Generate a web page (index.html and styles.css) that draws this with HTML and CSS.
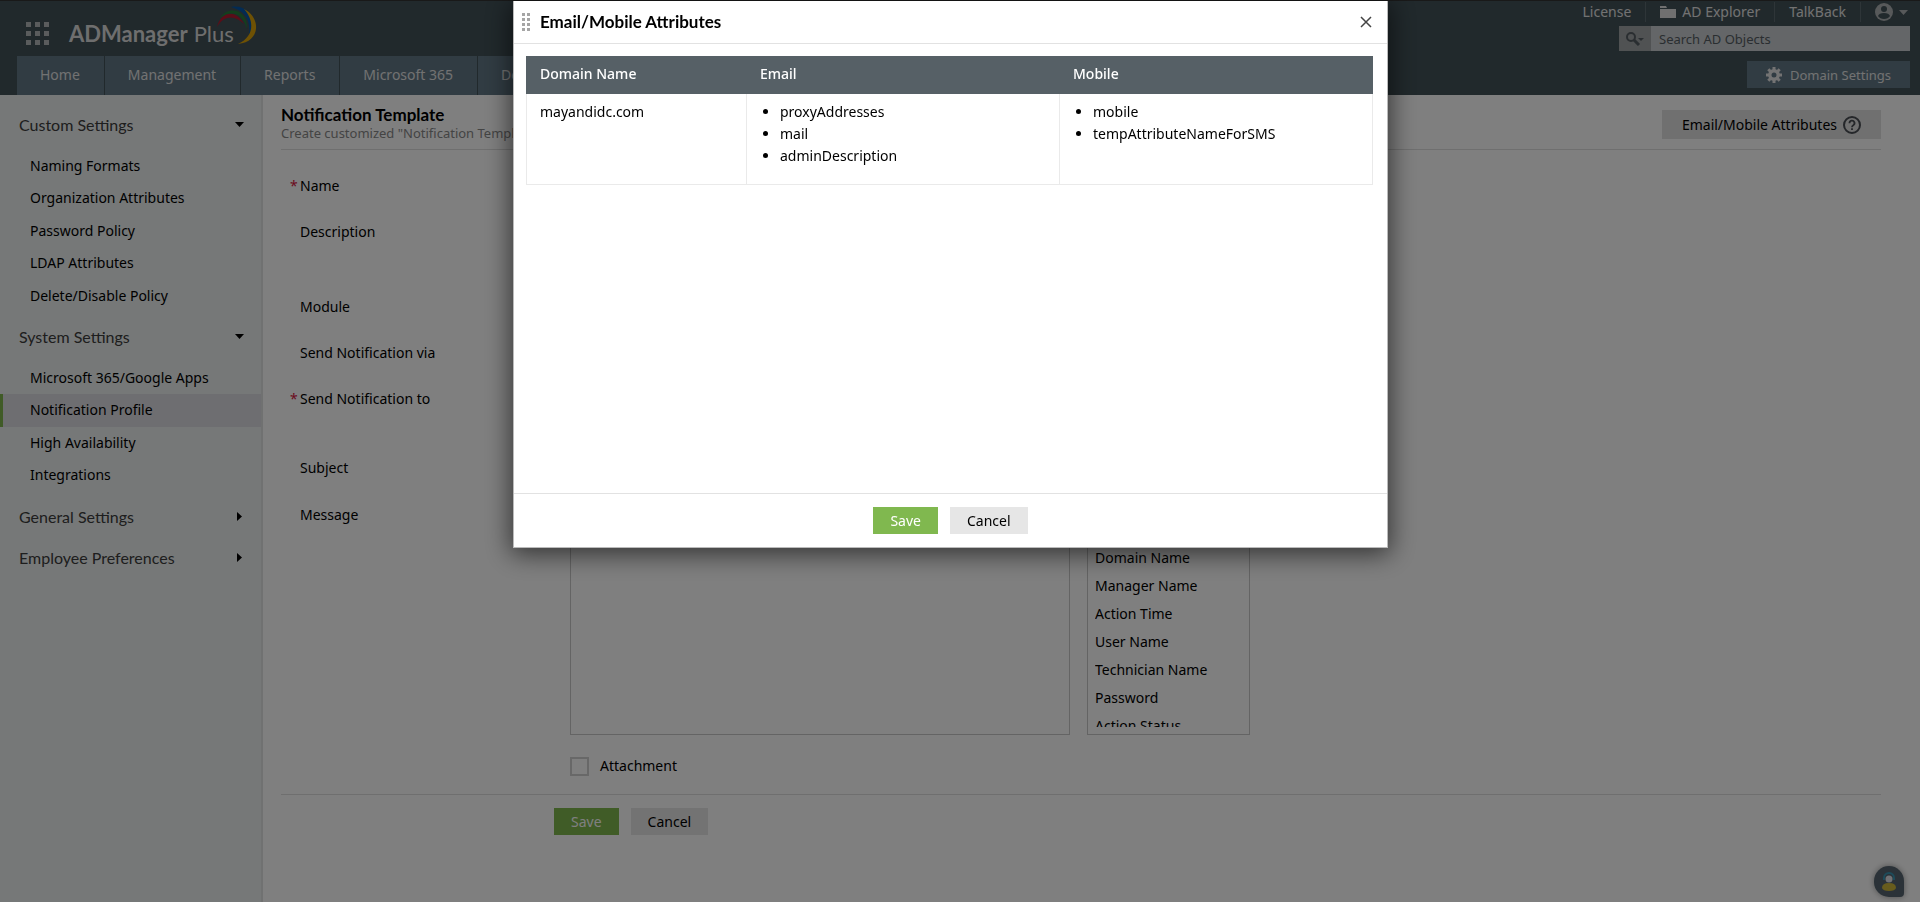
FILE: index.html
```html
<!DOCTYPE html>
<html lang="en">
<head>
<meta charset="utf-8">
<title>ADManager Plus</title>
<link rel="stylesheet" href="styles.css">
</head>
<body>
<header class="header">
  <div class="header-left">
    <div class="brand">
      <button class="icon-button" aria-label="Applications">
        <svg width="24" height="24" viewBox="0 0 24 24" fill="#b5b8ba"><path d="M0 0h5v5H0zM9 0h5v5H9zM18 0h5v5h-5zM0 9h5v5H0zM9 9h5v5H9zM18 9h5v5h-5zM0 18h5v5H0zM9 18h5v5H9zM18 18h5v5h-5z"/></svg>
      </button>
      <a class="logo" href="#"><b>ADManager</b> Plus
        <svg class="logo-arcs" width="42" height="40" viewBox="0 0 42 40">
          <path d="M1 21C5 5 20 3 28 18C19 9 8 9 1 21Z" fill="#b51a30"/>
          <path d="M4 12C12 -1 32 3 31 23C27 8 16 3 4 12Z" fill="#267f3b"/>
          <path d="M15 1C31 -2 41 12 33 29C35 14 29 5 15 1Z" fill="#0557a8"/>
          <path d="M28 3C45 11 45 36 22 38C38 31 39 15 28 3Z" fill="#dca309"/>
        </svg>
      </a>
    </div>
    <nav class="tabs">
      <a href="#">Home</a><a href="#">Management</a><a href="#">Reports</a><a href="#">Microsoft 365</a><a href="#">Delegation</a>
    </nav>
  </div>
  <div class="header-right">
    <div class="quick-links">
      <a href="#">License</a>
      <a href="#"><svg width="16" height="12" viewBox="0 0 16 12" fill="#e0e0e0"><path d="M0 0h6l1 2H0zM0 3h16v9H0z"/></svg>AD Explorer</a>
      <a href="#">TalkBack</a>
      <a href="#" class="account" aria-label="Account">
        <svg width="18" height="18" viewBox="0 0 18 18"><circle cx="9" cy="9" r="9" fill="#aeb2b4"/><circle cx="9" cy="6" r="3" fill="#425258"/><path d="M3 13q1-3 6-3t6 3q-2 3-6 3t-6-3z" fill="#425258"/></svg>
        <svg width="9" height="5" viewBox="0 0 9 5" fill="#aeb2b4"><path d="M0 0h9L4.500 5z"/></svg>
      </a>
    </div>
    <div class="search">
      <button class="search-type" aria-label="Search type">
        <svg width="18" height="14" viewBox="0 0 18 14"><circle cx="5" cy="5" r="4" fill="none" stroke="#555d62" stroke-width="2"/><path d="M8 8l5 5" stroke="#555d62" stroke-width="3"/><path d="M12 6h6l-3 3z" fill="#555d62"/></svg>
      </button>
      <input type="text" placeholder="Search AD Objects" aria-label="Search AD Objects">
    </div>
    <button class="domain-settings">
      <svg width="16" height="16" viewBox="0 0 16 16"><circle cx="8" cy="8" r="4.200" fill="none" stroke="#e6e6e6" stroke-width="3.400"/><path d="M8 0v3M8 13v3M0 8h3M13 8h3M2.300 2.300l2.200 2.200M11.500 11.500l2.200 2.200M2.300 13.700l2.200-2.200M11.500 4.500l2.200-2.200" stroke="#e6e6e6" stroke-width="3"/></svg>
      Domain Settings
    </button>
  </div>
</header>

<div class="layout">
  <aside class="sidebar">
    <button class="group">Custom Settings<svg width="9" height="5" viewBox="0 0 9 5"><path d="M0 0h9L4.500 5z"/></svg></button>
    <ul>
      <li><a href="#">Naming Formats</a></li>
      <li><a href="#">Organization Attributes</a></li>
      <li><a href="#">Password Policy</a></li>
      <li><a href="#">LDAP Attributes</a></li>
      <li><a href="#">Delete/Disable Policy</a></li>
    </ul>
    <button class="group">System Settings<svg width="9" height="5" viewBox="0 0 9 5"><path d="M0 0h9L4.500 5z"/></svg></button>
    <ul>
      <li><a href="#">Microsoft 365/Google Apps</a></li>
      <li><a href="#" class="active">Notification Profile</a></li>
      <li><a href="#">High Availability</a></li>
      <li><a href="#">Integrations</a></li>
    </ul>
    <button class="group">General Settings<svg width="9" height="9" viewBox="0 0 9 9"><path d="M2 0v9l5-4.500z"/></svg></button>
    <button class="group">Employee Preferences<svg width="9" height="9" viewBox="0 0 9 9"><path d="M2 0v9l5-4.500z"/></svg></button>
  </aside>

  <main class="content">
    <div class="page-head">
      <div>
        <h1>Notification Template</h1>
        <p>Create customized "Notification Templates"</p>
      </div>
      <button class="attributes">Email/Mobile Attributes
        <svg width="18" height="18" viewBox="0 0 18 18" fill="none" stroke="#4a4e54" stroke-width="2"><circle cx="9" cy="9" r="8"/><path d="M6.500 7.200a2.500 2.500 0 1 1 3.800 2q-1.300.8-1.300 2M9 12.200v1.800" stroke-width="1.800"/></svg>
      </button>
    </div>
    <form class="form">
      <div class="row"><label for="name" class="required">Name</label><input id="name" type="text"></div>
      <div class="row tall"><label for="description">Description</label><textarea id="description"></textarea></div>
      <div class="row"><label for="module">Module</label><select id="module"></select></div>
      <div class="row"><label for="via">Send Notification via</label><select id="via"></select></div>
      <div class="row mid"><label for="to" class="required">Send Notification to</label><input id="to" type="text"></div>
      <div class="row"><label for="subject">Subject</label><input id="subject" type="text"></div>
      <div class="row message">
        <label for="message">Message</label>
        <textarea id="message"></textarea>
        <div class="macros">
          <ul>
            <li>Full Name</li><li>Domain Name</li><li>Manager Name</li><li>Action Time</li><li>User Name</li><li>Technician Name</li><li>Password</li><li>Action Status</li>
          </ul>
        </div>
      </div>
      <div class="attachment"><input type="checkbox" id="attachment"><label for="attachment">Attachment</label></div>
      <div class="form-actions"><button type="button" class="btn save">Save</button><button type="button" class="btn">Cancel</button></div>
    </form>
  </main>
</div>

<button class="chat" aria-label="Support chat">
  <svg width="14" height="19" viewBox="0 0 14 19"><path d="M2 8V6a5 5 0 0 1 10 0v2" fill="none" stroke="#3a97b5" stroke-width="2"/><circle cx="7" cy="7" r="3.500" fill="#e2e2e8"/><path d="M0 16q0-5 7-5t7 5q-1 3-7 3t-7-3z" fill="#d0b83a"/></svg>
</button>

<div class="overlay">
  <section class="modal" role="dialog" aria-labelledby="modal-title">
    <div class="modal-head">
      <svg width="9" height="19" viewBox="0 0 9 19" fill="#a5a5a5"><path d="M0 0h3v3H0zM5 0h3v3H5zM0 5h3v3H0zM5 5h3v3H5zM0 10h3v3H0zM5 10h3v3H5zM0 15h3v3H0zM5 15h3v3H5z"/></svg>
      <h2 id="modal-title">Email/Mobile Attributes</h2>
      <button class="icon-button" aria-label="Close"><svg width="12" height="12" viewBox="0 0 12 12"><path d="M1 1l10 10M11 1L1 11" stroke="#444" stroke-width="1.500"/></svg></button>
    </div>
    <div class="modal-body">
      <table>
        <thead><tr><th class="col-domain">Domain Name</th><th>Email</th><th>Mobile</th></tr></thead>
        <tbody><tr>
          <td>mayandidc.com</td>
          <td><ul><li>proxyAddresses</li><li>mail</li><li>adminDescription</li></ul></td>
          <td><ul><li>mobile</li><li>tempAttributeNameForSMS</li></ul></td>
        </tr></tbody>
      </table>
    </div>
    <div class="modal-foot"><button class="btn save">Save</button><button class="btn">Cancel</button></div>
  </section>
</div>
</body>
</html>
```
FILE: styles.css
```css
* { box-sizing: border-box; }
body {
  margin: 0;
  min-height: 100vh;
  display: flex;
  flex-direction: column;
  font: 14px/22px "Noto Sans", "DejaVu Sans", sans-serif;
  color: #000;
  background: #fff;
}
button, input, select, textarea { font: inherit; color: inherit; }
button { border: 0; padding: 0; background: none; cursor: pointer; }
a { color: inherit; text-decoration: none; }
ul { margin: 0; padding: 0; list-style: none; }
h1, h2, p { margin: 0; }
svg { display: block; flex: none; }

.header {
  display: flex;
  justify-content: space-between;
  height: 95px;
  background: #425258;
  border-top: 1px solid #333;
  color: #e4e4e4;
}
.header-left { display: flex; flex-direction: column; }
.brand { display: flex; align-items: center; gap: 19px; height: 56px; padding: 10px 0 0 26px; }
.logo { display: flex; position: relative; font: 400 22px/28px Lato, sans-serif; gap: 6px; color: #ddd; }
.logo b { font-weight: 700; }
.logo-arcs { position: absolute; right: -24px; top: -14px; }
.tabs { display: flex; gap: 1px; margin-left: 17px; }
.tabs a { height: 39px; line-height: 38px; padding: 0 24px 0 23px; background: #627886; }

.header-right { display: flex; flex-direction: column; align-items: flex-end; padding-right: 10px; }
.quick-links { display: flex; height: 25px; align-items: center; padding-bottom: 3px; }
.quick-links a { display: flex; align-items: center; gap: 6px; height: 20px; padding: 0 14px; border-left: 1px solid #5d6a70; }
.quick-links a:first-child { border-left: 0; }
.quick-links .account { padding-right: 2px; }
.search { display: flex; width: 291px; height: 25px; }
.search-type { width: 32px; padding-left: 7px; background: #a0a4a6; }
.search input { flex: 1; min-width: 0; border: 0; padding: 0 8px; background: #c8ccd0; font-size: 13px; }
.search input::placeholder { color: #555d62; opacity: 1; }
.domain-settings { display: flex; align-items: center; gap: 8px; height: 27px; margin-top: 10px; padding: 0 19px; background: #627886; font-size: 13px; }

.layout { flex: 1; display: flex; }
.sidebar { width: 263px; padding-top: 9px; background: #ecf0f0; border-right: 2px solid #e0e3e3; }
.group {
  display: flex; justify-content: space-between; align-items: center;
  width: 100%; height: 41px; padding: 0 17px 0 19px;
  font: 16px/24px Lato, sans-serif; color: #3c3c3c;
}
.sidebar ul { padding: 5px 0 4px; }
.sidebar li a { display: block; height: 33px; line-height: 32px; padding-left: 30px; }
.sidebar li:nth-child(odd) a { height: 32px; }
.sidebar .active { padding-left: 27px; border-left: 3px solid #80b74e; background: #dddde2; }

.content { flex: 1; min-width: 0; padding: 10px 39px 20px 18px; }
.page-head { display: flex; justify-content: space-between; align-items: flex-start; height: 45px; border-bottom: 1px solid #dedede; }
h1, h2 { font: 700 17px/20px Lato, sans-serif; }
.page-head p { font-size: 13px; line-height: 16px; color: #888; }
.attributes { display: flex; align-items: center; gap: 6px; height: 29px; margin-top: 5px; padding: 0 20px; background: #e0e0e0; }

.form { padding-top: 24px; }
.row { display: flex; align-items: flex-start; min-height: 46px; padding-left: 19px; }
.row > label { width: 270px; line-height: 24px; }
.row > input, .row > select, .row > textarea { width: 320px; height: 26px; border: 1px solid #bbb; background: #fff; }
.required::before { content: "*"; display: inline-block; width: 10px; margin-left: -10px; color: #d8143c; }
.tall { min-height: 75px; }
.row.tall > textarea { height: 56px; }
.mid { min-height: 69px; }
.message { padding-top: 3px; }
.row.message > label { line-height: 20px; }
.row.message > textarea { width: 500px; height: 230px; border-color: #c8c8c8; resize: none; }
.macros { width: 163px; height: 230px; margin-left: 17px; padding: 10px 7px 7px; border: 1px solid #c8c8c8; }
.macros ul { height: 100%; overflow: hidden; }
.macros li { height: 28px; line-height: 28px; }
.attachment { display: flex; align-items: center; gap: 11px; margin-left: 289px; padding: 20px 0 17px; }
.attachment input { appearance: none; width: 19px; height: 19px; margin: 0; border: 2px solid #d0d0d0; background: #fff; }
.form-actions { display: flex; gap: 12px; padding: 13px 0 0 273px; border-top: 1px solid #dedede; }
.btn { height: 27px; padding: 0 17px; background: #e6e6e6; line-height: 27px; }
.btn.save { background: #80b84f; color: #fff; }

.chat {
  position: fixed; right: 16px; bottom: 5px;
  display: flex; justify-content: center; align-items: center;
  width: 30px; height: 31px; border-radius: 15px 15px 4px 15px;
  background: #566570; box-shadow: 0 0 6px rgba(0, 0, 0, .4);
}

.overlay { position: fixed; inset: 0; display: flex; justify-content: center; align-items: flex-start; padding: 1px 19px 0 0; background: rgba(0, 0, 0, .5); }
.modal { width: 875px; max-width: 100%; background: #fff; border: 1px solid #bbb; border-top: 0; box-shadow: 0 4px 24px 2px rgba(0, 0, 0, .6); }
.modal-head { display: flex; align-items: center; height: 43px; padding: 0 15px 0 8px; border-bottom: 1px solid #e2e2e2; }
.modal-head h2 { flex: 1; margin-left: 9px; }
.modal-body { height: 449px; padding: 12px 14px 0 12px; }
table { width: 100%; border-collapse: collapse; table-layout: fixed; }
th, td { padding: 7px 13px; text-align: left; vertical-align: top; border: 1px solid #eaeaea; }
th { height: 37px; padding-top: 6px; background: #566066; border-color: #566066; color: #fff; font-weight: 500; }
.col-domain { width: 220px; }
td { height: 91px; }
td ul { padding-left: 20px; list-style: disc; }
.modal-foot { display: flex; justify-content: center; gap: 12px; padding: 13px 0; border-top: 1px solid #e2e2e2; }
```
